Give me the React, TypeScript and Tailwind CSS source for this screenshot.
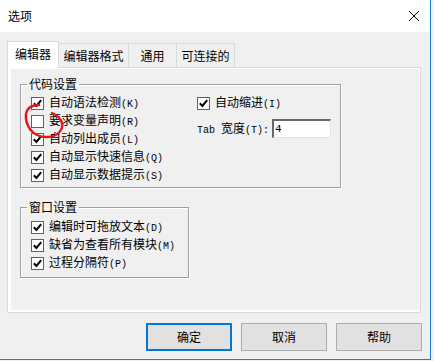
import React from 'react';

const cjk = "font-['Noto_Sans_CJK_SC',sans-serif]";

// split text so ASCII parts render half-width like the dialog font
function Label({ text }: { text: string }) {
  const parts = text.split(/([\x00-\x7f]+)/).filter(Boolean);
  return (
    <span className="whitespace-pre">
      {parts.map((p, i) =>
        /^[\x00-\x7f]+$/.test(p) ? (
          <span key={i} className="font-['Liberation_Mono',monospace] text-[10px]">
            {p}
          </span>
        ) : (
          <span key={i}>{p}</span>
        )
      )}
    </span>
  );
}

function Check({ label, checked = true }: { label: string; checked?: boolean }) {
  return (
    <div className="flex h-[18px] items-center">
      <div className="flex h-[13px] w-[13px] items-center justify-center border border-[#606060] bg-white">
        {checked && (
          <svg width="9" height="9" viewBox="0 0 9 9">
            <path d="M0.8 4.3 L3.4 7 L8.2 1.2" fill="none" stroke="#000" strokeWidth="2" />
          </svg>
        )}
      </div>
      <div className="ml-[5px] text-[12px] leading-none text-black">
        <Label text={label} />
      </div>
    </div>
  );
}

function Group({ title, className, children }: { title: string; className: string; children: React.ReactNode }) {
  return (
    <fieldset className={`border border-[#a0a0a0] shadow-[inset_1px_1px_0_#fff,1px_1px_0_#fff] ${className}`}>
      <legend className="ml-[6px] px-[2px] text-[12px] leading-[16px] text-black">{title}</legend>
      {children}
    </fieldset>
  );
}

const tabs = [
  { name: '编辑器格式', w: 'w-[70px]' },
  { name: '通用', w: 'w-[48px]' },
  { name: '可连接的', w: 'w-[58px]' },
];

export default function App() {
  return (
    <div className={`relative h-[361px] w-[434px] bg-[#f3f3f3] ${cjk}`}>
      <div className="flex h-[360px] w-[431px] flex-col border-b border-r border-[#1a7ed6] bg-[#f0f0f0]">
        {/* title bar */}
        <div className="flex h-[32px] shrink-0 items-center justify-between bg-white pl-[8px] pr-[11px]">
          <span className="text-[12px] text-black">选项</span>
          <svg width="10" height="10" viewBox="0 0 10 10">
            <path d="M0 0 L10 10 M10 0 L0 10" stroke="#000" strokeWidth="1" />
          </svg>
        </div>

        <div className="flex flex-1 flex-col px-[7px] pt-[8px]">
          {/* tab headers */}
          <div className="flex h-[27px] items-end">
            <div className="z-10 -mb-px flex h-[27px] w-[52px] items-center justify-center border border-b-0 border-[#d9d9d9] bg-white pb-[2px] text-[12px] text-black">
              编辑器
            </div>
            {tabs.map((t) => (
              <div
                key={t.name}
                className={`flex h-[24px] ${t.w} items-center justify-center border-r border-t border-[#d9d9d9] bg-[#f0f0f0] text-[12px] text-black`}
              >
                {t.name}
              </div>
            ))}
          </div>

          {/* tab page */}
          <div className="h-[246px] w-[414px] border border-[#d9d9d9] bg-white pb-[2px] pl-[3px] pr-px pt-px">
            <div className="flex h-full flex-col bg-[#f0f0f0] pl-[9px] pt-[7px]">
              <Group title="代码设置" className="h-[112px] w-[321px]">
                <div className="flex pl-[10px] pt-[2px]">
                  <div className="w-[166px]">
                    <Check label="自动语法检测(K)" />
                    <Check label="要求变量声明(R)" checked={false} />
                    <Check label="自动列出成员(L)" />
                    <Check label="自动显示快速信息(Q)" />
                    <Check label="自动显示数据提示(S)" />
                  </div>
                  <div>
                    <Check label="自动缩进(I)" />
                    <div className="mt-[7px] flex items-center">
                      <span className="text-[12px] leading-none text-black">
                        <Label text="Tab 宽度(T):" />
                      </span>
                      <div className="ml-[3px] flex h-[19px] w-[59px] items-center border-b border-l-2 border-r border-t-2 border-b-[#e3e3e3] border-l-[#696969] border-r-[#e3e3e3] border-t-[#696969] bg-white pl-px">
                        <span className="font-['Liberation_Mono',monospace] text-[11px] text-black">4</span>
                      </div>
                    </div>
                  </div>
                </div>
              </Group>

              <Group title="窗口设置" className="mt-[11px] h-[79px] w-[169px]">
                <div className="pl-[10px] pt-[3px]">
                  <Check label="编辑时可拖放文本(D)" />
                  <Check label="缺省为查看所有模块(M)" />
                  <Check label="过程分隔符(P)" />
                </div>
              </Group>
            </div>
          </div>

          {/* buttons */}
          <div className="mt-[10px] flex justify-end gap-[9px] pr-px">
            <button className="h-[28px] w-[86px] border-2 border-[#0078d7] bg-[#e1e1e1] text-[12px] text-black">
              确定
            </button>
            <button className="h-[28px] w-[86px] border border-[#adadad] bg-[#e1e1e1] text-[12px] text-black">
              取消
            </button>
            <button className="h-[28px] w-[86px] border border-[#adadad] bg-[#e1e1e1] text-[12px] text-black">
              帮助
            </button>
          </div>
        </div>
      </div>

      {/* red annotation circle drawn over the dialog */}
      <svg className="pointer-events-none absolute left-0 top-0" width="434" height="361">
        <path
          d="M52 113 C59 116, 65 123, 61 130 C57 137, 46 139, 37 135 C29 131, 25 122, 26 114 C27 108, 32 105, 39 105"
          fill="none"
          stroke="#e8141b"
          strokeWidth="2.4"
          strokeLinecap="round"
        />
      </svg>
    </div>
  );
}
